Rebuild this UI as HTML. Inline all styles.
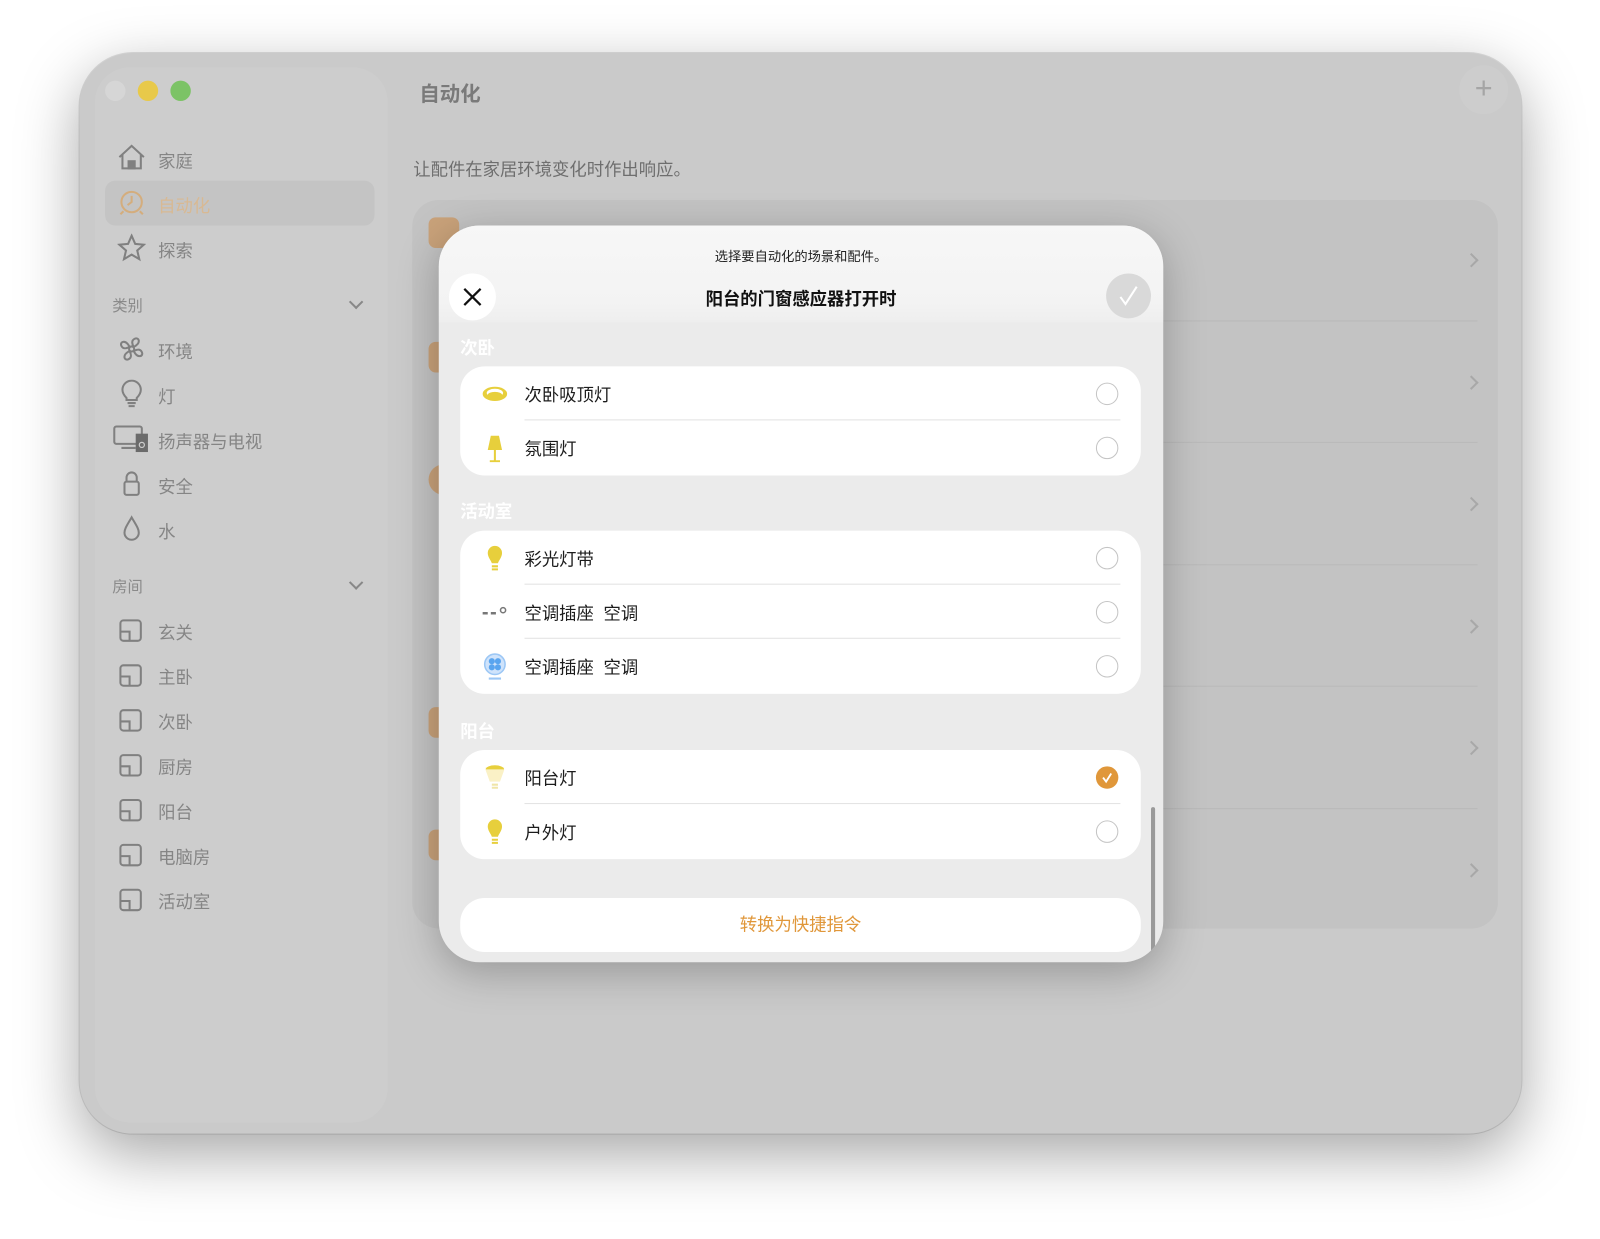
<!DOCTYPE html>
<html><head><meta charset="utf-8"><style>
*{margin:0;padding:0;box-sizing:border-box}
body{width:1600px;height:1239px;background:#fff;font-family:"Liberation Sans","Noto Sans CJK SC",sans-serif;position:relative;overflow:hidden}
#w{position:absolute;left:0;top:0;width:1568px;height:1214px;transform:scale(1.0204);transform-origin:0 0}
.win{position:absolute;left:78px;top:52px;width:1413px;height:1059px;border-radius:52px;background:#cacaca;box-shadow:0 20px 60px rgba(0,0,0,.35),0 0 0 1px rgba(0,0,0,.12)}
.side{position:absolute;left:93px;top:66px;width:287px;height:1034px;border-radius:34px;background:#cdcdcd}
.abs{position:absolute}
.dot{position:absolute;top:79px;width:20px;height:20px;border-radius:50%}
.si{position:absolute;left:155px;font-size:17px;color:#858585}
.ic{position:absolute;left:115px}
.sec{position:absolute;left:110px;font-size:15px;color:#8a8a8a}
.chev{position:absolute;left:344px;width:10px;height:10px;border-right:2px solid #888;border-bottom:2px solid #888;transform:rotate(45deg)}
.card{position:absolute;left:404px;top:196px;width:1064px;height:714px;border-radius:26px;background:#c3c3c3}
.rc{position:absolute;left:1437px;width:10px;height:10px;border-right:2px solid #a8a8a8;border-top:2px solid #a8a8a8;transform:rotate(45deg)}
.sep{position:absolute;left:1120px;width:328px;height:1px;background:#b9b9b9}
.modal{position:absolute;left:430px;top:221px;width:710px;height:722px;border-radius:40px;background:#ebebeb;overflow:hidden;box-shadow:0 10px 40px rgba(0,0,0,.25)}
.grp{position:absolute;left:21px;width:667px;background:#fff;border-radius:24px}
.row{position:absolute;left:0;width:667px;height:53px}
.row .t{position:absolute;left:63px;top:14px;font-size:17px;color:#1c1c1c}
.row .r{position:absolute;left:623px;top:16px;width:22px;height:22px;border-radius:50%;border:1.5px solid #c4c4c4}
.row .ln{position:absolute;left:63px;right:20px;bottom:0;height:1px;background:#e2e2e2}
.row svg{position:absolute;left:20px;top:13px}
.gl{position:absolute;left:21px;font-size:17px;color:#fff;font-weight:bold}
</style></head><body><div id="w">
<div class="win"></div>
<div class="side"></div>
<div class="dot" style="left:103px;background:#d6d6d6"></div>
<div class="dot" style="left:135px;background:#e8c94a"></div>
<div class="dot" style="left:167px;background:#7cc366"></div>
<div class="abs" style="left:103px;top:177px;width:264px;height:44px;border-radius:10px;background:#c4c4c4"></div>
<svg class="ic" style="top:140px" width="28" height="28" viewBox="0 0 28 28" fill="none" stroke="#808080" stroke-width="2"><path d="M2 14 L14 3 L26 14 M5 11 V25 H23 V11"/><rect x="11" y="18" width="6" height="7" fill="#808080"/></svg>
<div class="si" style="top:144px">家庭</div>
<svg class="ic" style="top:185px" width="28" height="28" viewBox="0 0 28 28" fill="none" stroke="#d4ad7d" stroke-width="2"><circle cx="14" cy="13" r="10"/><path d="M14 7v6l-4 3M3 25l3-3M25 25l-3-3"/></svg>
<div class="si" style="top:188px;color:#d8b993">自动化</div>
<svg class="ic" style="top:229px" width="28" height="28" viewBox="0 0 28 28" fill="none" stroke="#808080" stroke-width="2"><path d="M14 2l3.5 8 8.5.8-6.5 5.7 2 8.5L14 20.5 6.5 25l2-8.5L2 10.8l8.5-.8z"/></svg>
<div class="si" style="top:232px">探索</div>
<div class="sec" style="top:289px">类别</div><div class="chev" style="top:291px"></div>
<svg class="ic" style="top:328px" width="28" height="28" viewBox="0 0 28 28" fill="none" stroke="#808080" stroke-width="2"><circle cx="14" cy="14" r="2.5"/><path d="M12 12C8 4 2 7 4 11s6 2 8 1M16 12c8-4 5-10 1-8s-2 6-1 8M16 16c4 8 10 5 8 1s-6-2-8-1M12 16c-8 4-5 10-1 8s2-6 1-8"/></svg>
<div class="si" style="top:331px">环境</div>
<svg class="ic" style="top:372px" width="28" height="28" viewBox="0 0 28 28" fill="none" stroke="#808080" stroke-width="2"><path d="M9 18c-3-3-4-5-4-8a9 9 0 0118 0c0 3-1 5-4 8v2H9z M10 23h8M11 26h6"/></svg>
<div class="si" style="top:375px">灯</div>
<svg class="ic" style="left:110px;top:416px" width="36" height="28" viewBox="0 0 36 28" fill="none" stroke="#808080" stroke-width="2"><rect x="2" y="2" width="27" height="17" rx="2"/><path d="M9 23h14"/><rect x="24" y="10" width="10" height="16" fill="#6b6b6b" stroke="#6b6b6b"/><circle cx="29" cy="20" r="2.5" stroke="#ccc" stroke-width="1.2"/></svg>
<div class="si" style="top:419px">扬声器与电视</div>
<svg class="ic" style="top:460px" width="28" height="28" viewBox="0 0 28 28" fill="none" stroke="#808080" stroke-width="2"><rect x="7" y="12" width="14" height="13" rx="2"/><path d="M9 12V8a5 5 0 0110 0v4"/></svg>
<div class="si" style="top:463px">安全</div>
<svg class="ic" style="top:504px" width="28" height="28" viewBox="0 0 28 28" fill="none" stroke="#808080" stroke-width="2"><path d="M14 3C10 10 7 14 7 18a7 7 0 0014 0c0-4-3-8-7-15z"/></svg>
<div class="si" style="top:507px">水</div>
<div class="sec" style="top:564px">房间</div><div class="chev" style="top:566px"></div>
<svg class="ic" style="top:605px" width="26" height="26" viewBox="0 0 26 26" fill="none" stroke="#808080" stroke-width="2"><rect x="3" y="3" width="20" height="20" rx="3"/><path d="M3 14h9v9"/></svg><div class="si" style="top:606px">玄关</div>
<svg class="ic" style="top:649px" width="26" height="26" viewBox="0 0 26 26" fill="none" stroke="#808080" stroke-width="2"><rect x="3" y="3" width="20" height="20" rx="3"/><path d="M3 14h9v9"/></svg><div class="si" style="top:650px">主卧</div>
<svg class="ic" style="top:693px" width="26" height="26" viewBox="0 0 26 26" fill="none" stroke="#808080" stroke-width="2"><rect x="3" y="3" width="20" height="20" rx="3"/><path d="M3 14h9v9"/></svg><div class="si" style="top:694px">次卧</div>
<svg class="ic" style="top:737px" width="26" height="26" viewBox="0 0 26 26" fill="none" stroke="#808080" stroke-width="2"><rect x="3" y="3" width="20" height="20" rx="3"/><path d="M3 14h9v9"/></svg><div class="si" style="top:738px">厨房</div>
<svg class="ic" style="top:781px" width="26" height="26" viewBox="0 0 26 26" fill="none" stroke="#808080" stroke-width="2"><rect x="3" y="3" width="20" height="20" rx="3"/><path d="M3 14h9v9"/></svg><div class="si" style="top:782px">阳台</div>
<svg class="ic" style="top:825px" width="26" height="26" viewBox="0 0 26 26" fill="none" stroke="#808080" stroke-width="2"><rect x="3" y="3" width="20" height="20" rx="3"/><path d="M3 14h9v9"/></svg><div class="si" style="top:826px">电脑房</div>
<svg class="ic" style="top:869px" width="26" height="26" viewBox="0 0 26 26" fill="none" stroke="#808080" stroke-width="2"><rect x="3" y="3" width="20" height="20" rx="3"/><path d="M3 14h9v9"/></svg><div class="si" style="top:870px">活动室</div>

<div class="abs" style="left:411px;top:76px;font-size:20px;font-weight:bold;color:#7a7a7a">自动化</div>
<div class="abs" style="left:1430px;top:64px;width:48px;height:48px;border-radius:50%;background:#cdcdcd;color:#a5a5a5;font-size:30px;text-align:center;line-height:46px">+</div>
<div class="abs" style="left:405px;top:152px;font-size:17px;color:#6e6e6e">让配件在家居环境变化时作出响应。</div>
<div class="card"></div>
<div class="abs" style="left:420px;top:213px;width:30px;height:30px;border-radius:7px;background:#c9a27a"></div>
<div class="abs" style="left:420px;top:335px;width:30px;height:30px;border-radius:7px;background:#c9a27a"></div>
<div class="abs" style="left:420px;top:455px;width:30px;height:30px;border-radius:50%;background:#c9a27a"></div>
<div class="abs" style="left:420px;top:693px;width:30px;height:30px;border-radius:7px;background:#c9a27a"></div>
<div class="abs" style="left:420px;top:813px;width:30px;height:30px;border-radius:7px;background:#c9a27a"></div>
<div class="rc" style="top:250px"></div><div class="rc" style="top:370px"></div><div class="rc" style="top:489px"></div><div class="rc" style="top:609px"></div><div class="rc" style="top:728px"></div><div class="rc" style="top:848px"></div>
<div class="sep" style="top:314px"></div><div class="sep" style="top:433px"></div><div class="sep" style="top:553px"></div><div class="sep" style="top:672px"></div><div class="sep" style="top:792px"></div>

<div class="modal">
  <div class="abs" style="left:0;top:0;width:710px;height:95px;background:linear-gradient(#f7f7f7,#f3f3f3 80%,rgba(240,240,240,.6))"></div>
  <div class="abs" style="left:0;top:20px;width:710px;text-align:center;font-size:13px;color:#222">选择要自动化的场景和配件。</div>
  <div class="abs" style="left:0;top:58px;width:710px;text-align:center;font-size:17px;font-weight:bold;color:#111">阳台的门窗感应器打开时</div>
  <div class="abs" style="left:10px;top:47px;width:46px;height:46px;border-radius:50%;background:#fff"></div>
  <svg class="abs" style="left:22px;top:59px" width="22" height="22" viewBox="0 0 22 22" stroke="#111" stroke-width="2.2"><path d="M3 3l16 16M19 3L3 19"/></svg>
  <div class="abs" style="left:654px;top:47px;width:44px;height:44px;border-radius:50%;background:#d9d9d9"></div>
  <svg class="abs" style="left:664px;top:57px" width="24" height="24" viewBox="0 0 24 24" fill="none" stroke="#fff" stroke-width="2"><path d="M4 13l5 7L20 3"/></svg>
  <div class="gl" style="top:106px">次卧</div>
  <div class="grp" style="top:138px;height:107px">
    <div class="row" style="top:0"><svg width="28" height="26" viewBox="0 0 28 26"><ellipse cx="14" cy="14" rx="12" ry="7" fill="#e7cf3c"/><ellipse cx="14" cy="13" rx="8" ry="4" fill="#fff"/><ellipse cx="14" cy="15" rx="7" ry="3" fill="#e7cf3c"/></svg><div class="t">次卧吸顶灯</div><div class="r"></div><div class="ln"></div></div>
    <div class="row" style="top:53px"><svg width="28" height="28" viewBox="0 0 28 28"><path d="M10 2h8l3 14H7z" fill="#e7cf3c"/><path d="M14 16v10M9 27h10" stroke="#e7cf3c" stroke-width="2"/></svg><div class="t">氛围灯</div><div class="r"></div></div>
  </div>
  <div class="gl" style="top:266px">活动室</div>
  <div class="grp" style="top:299px;height:160px">
    <div class="row" style="top:0"><svg width="28" height="28" viewBox="0 0 28 28"><path d="M14 2a7 7 0 017 7c0 4-3 7-4 10h-6c-1-3-4-6-4-10a7 7 0 017-7z" fill="#e7cf3c"/><path d="M11 22h6M11 25h6" stroke="#e7cf3c" stroke-width="2"/></svg><div class="t">彩光灯带</div><div class="r"></div><div class="ln"></div></div>
    <div class="row" style="top:53px"><svg width="28" height="28" viewBox="0 0 28 28"><path d="M2 15h5M10 15h5" stroke="#777" stroke-width="2.5"/><circle cx="22" cy="12" r="2.5" fill="none" stroke="#777" stroke-width="1.5"/></svg><div class="t">空调插座&nbsp;&nbsp;空调</div><div class="r"></div><div class="ln"></div></div>
    <div class="row" style="top:106px"><svg width="28" height="28" viewBox="0 0 28 28"><circle cx="14" cy="12" r="10" fill="#cfe3fb" stroke="#9cc7f5" stroke-width="1.5"/><circle cx="11" cy="9" r="3" fill="#5aa5ef"/><circle cx="17" cy="9" r="3" fill="#5aa5ef"/><circle cx="11" cy="15" r="3" fill="#5aa5ef"/><circle cx="17" cy="15" r="3" fill="#5aa5ef"/><path d="M8 26h12" stroke="#9cc7f5" stroke-width="2"/></svg><div class="t">空调插座&nbsp;&nbsp;空调</div><div class="r"></div></div>
  </div>
  <div class="gl" style="top:482px">阳台</div>
  <div class="grp" style="top:514px;height:107px">
    <div class="row" style="top:0"><svg width="28" height="28" viewBox="0 0 28 28"><path d="M5 4h18v3l-4 11h-10L5 7z" fill="#faf1c6"/><path d="M5 6a9 4 0 0118 0z" fill="#e7cf3c"/><path d="M11 21h6M11 24h6" stroke="#f0e5a8" stroke-width="2"/></svg><div class="t">阳台灯</div><div class="r" style="border:none;background:#e0973a"></div><svg style="left:628px;top:21px" width="12" height="12" viewBox="0 0 12 12" fill="none" stroke="#fff" stroke-width="1.8"><path d="M2 6l3 4 5-8"/></svg><div class="ln"></div></div>
    <div class="row" style="top:53px"><svg width="28" height="28" viewBox="0 0 28 28"><path d="M14 2a7 7 0 017 7c0 4-3 7-4 10h-6c-1-3-4-6-4-10a7 7 0 017-7z" fill="#e7cf3c"/><path d="M11 22h6M11 25h6" stroke="#e7cf3c" stroke-width="2"/></svg><div class="t">户外灯</div><div class="r"></div></div>
  </div>
  <div class="grp" style="top:659px;height:53px;text-align:center;font-size:17px;color:#e0973a;line-height:53px">转换为快捷指令</div>
  <div class="abs" style="left:698px;top:570px;width:4px;height:146px;border-radius:2px;background:#9a9a9a"></div>
</div>
</div></body></html>
